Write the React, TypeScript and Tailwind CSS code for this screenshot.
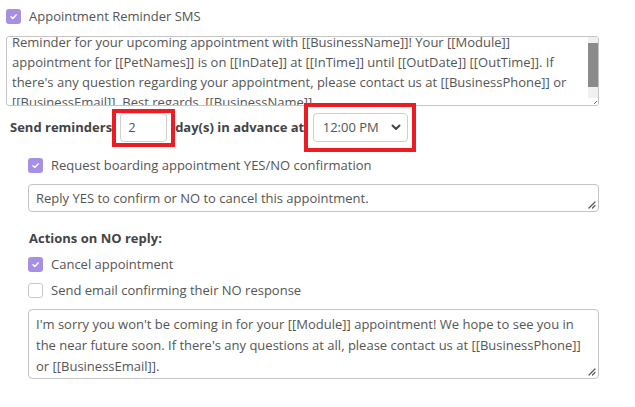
import React from "react";

function CheckBox({ checked }: { checked: boolean }) {
  if (checked) {
    return (
      <div className="w-[15px] h-[15px] rounded-[3px] bg-[#a690e6] flex items-center justify-center shrink-0">
        <svg width="9" height="9" viewBox="0 0 10 10">
          <path d="M2.2 5.2 L4.2 7.1 L7.9 3.2" fill="none" stroke="white" strokeWidth="1.6" strokeLinecap="round" strokeLinejoin="round" />
        </svg>
      </div>
    );
  }
  return <div className="w-[15px] h-[15px] rounded-[3px] bg-white border border-[#c6c6cc] shrink-0" />;
}

function Grip() {
  return (
    <svg className="absolute right-[2px] bottom-[2px]" width="9" height="9" viewBox="0 0 9 9">
      <path d="M8 2 L2 8 M8 5.5 L5.5 8" stroke="#555" strokeWidth="1.2" strokeLinecap="round" />
    </svg>
  );
}

export default function App() {
  return (
    <div className="w-[635px] h-[407px] bg-white overflow-hidden text-[13px] text-[#555] font-['Open_Sans',sans-serif]">
      <div className="pt-[9px] pl-[6px]">
        <div className="flex items-center gap-[8px] h-[15px]">
          <CheckBox checked />
          <span className="leading-[15px]">Appointment Reminder SMS</span>
        </div>

        <div className="mt-[12px] w-[593px] h-[70px] border border-[#c4c4c4] rounded-[3px] flex overflow-hidden">
          <div className="flex-1 overflow-hidden pl-[5px] leading-[20px] whitespace-nowrap">
            <div className="-mt-[5px]">
              <div>Reminder for your upcoming appointment with [[BusinessName]]! Your [[Module]]</div>
              <div>appointment for [[PetNames]] is on [[InDate]] at [[InTime]] until [[OutDate]] [[OutTime]]. If</div>
              <div>there's any question regarding your appointment, please contact us at [[BusinessPhone]] or</div>
              <div>[[BusinessEmail]]. Best regards, [[BusinessName]]</div>
            </div>
          </div>
          <div className="w-[10px] flex flex-col bg-[#f0f0f0]">
            <div className="h-[6px]" />
            <div className="h-[44px] bg-[#8b8b8b]" />
            <div className="flex-1" />
            <div className="h-[7px] bg-white flex items-end justify-end">
              <svg width="6" height="6" viewBox="0 0 6 6">
                <path d="M5 2 L2 5" stroke="#666" strokeWidth="1" />
              </svg>
            </div>
          </div>
        </div>

        <div className="-mt-[3px] h-[49px] flex items-center">
          <span className="ml-[4px] font-bold text-[#444]">Send reminders</span>
          <div className="w-[63px] h-[38px] border-4 border-[#ed1c24] flex items-center justify-center">
            <div className="w-[47px] h-[29px] border border-[#cfcfcf] rounded-[4px] flex items-center pl-[7px]">2</div>
          </div>
          <span className="font-bold text-[#444]">day(s) in advance at</span>
          <div className="w-[112px] h-[49px] border-4 border-[#ed1c24] flex items-center justify-center">
            <div className="w-[95px] h-[29px] border border-[#cfcfcf] rounded-[4px] flex items-center justify-between pl-[9px] pr-[6px]">
              <span>12:00 PM</span>
              <svg width="10" height="7" viewBox="0 0 10 7">
                <path d="M1.5 1.5 L5 5 L8.5 1.5" fill="none" stroke="#444" strokeWidth="2" strokeLinecap="round" strokeLinejoin="round" />
              </svg>
            </div>
          </div>
        </div>

        <div className="pl-[22px]">
          <div className="mt-[6px] flex items-center gap-[8px] h-[15px]">
            <CheckBox checked />
            <span>Request boarding appointment YES/NO confirmation</span>
          </div>

          <div className="relative mt-[11px] w-[571px] h-[28px] border border-[#c4c4c4] rounded-[4px] pl-[7px] leading-[26px] whitespace-nowrap">
            Reply YES to confirm or NO to cancel this appointment.
            <Grip />
          </div>

          <div className="mt-[16px] pl-[1px] h-[20px] leading-[20px] font-bold text-[#444]">Actions on NO reply:</div>

          <div className="mt-[9px] flex items-center gap-[8px] h-[15px]">
            <CheckBox checked />
            <span>Cancel appointment</span>
          </div>
          <div className="mt-[11px] flex items-center gap-[8px] h-[15px]">
            <CheckBox checked={false} />
            <span>Send email confirming their NO response</span>
          </div>

          <div className="relative mt-[11px] w-[571px] h-[70px] border border-[#c4c4c4] rounded-[4px] pl-[7px] pt-[4px] leading-[21px] whitespace-nowrap">
            <div>I'm sorry you won't be coming in for your [[Module]] appointment! We hope to see you in</div>
            <div>the near future soon. If there's any questions at all, please contact us at [[BusinessPhone]]</div>
            <div>or [[BusinessEmail]].</div>
            <Grip />
          </div>
        </div>
      </div>
    </div>
  );
}
